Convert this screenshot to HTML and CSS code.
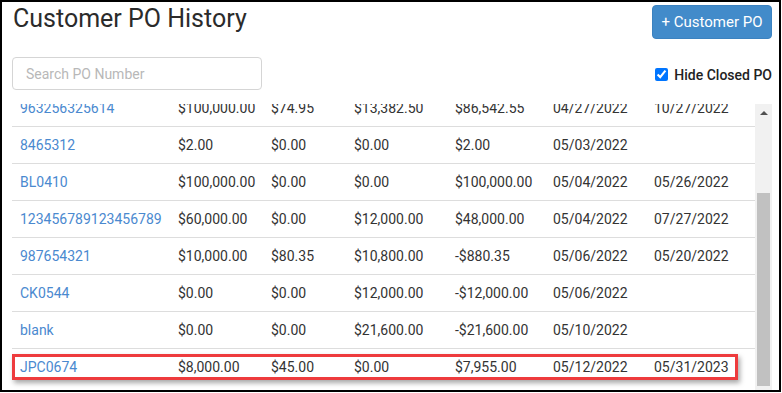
FILE: index.html
```html
<!DOCTYPE html>
<html lang="en">
<head>
    <meta charset="UTF-8">
    <meta name="viewport" content="width=device-width, initial-scale=1.0">
    <title>Customer PO History</title>
    <link rel="stylesheet" href="styles.css">
</head>
<body>
<div class="frame">
    <div class="page">
        <div class="page-head">
            <h1>Customer PO History</h1>
            <button type="button" class="btn-add">+ Customer PO</button>
        </div>

        <div class="filters">
            <input type="text" class="search" placeholder="Search PO Number" />
            <label class="hide-closed">
                <input type="checkbox" checked />
                Hide Closed PO
            </label>
        </div>

        <div class="po-list">
            <div class="po-viewport">
                <table class="po-table">
                    <colgroup>
                        <col class="c-po"><col class="c-amt"><col class="c-fee"><col class="c-used">
                        <col class="c-bal"><col class="c-date"><col class="c-close">
                    </colgroup>
                    <tbody>
                    <tr><td><a href="#">963256325614</a></td><td>$100,000.00</td><td>$74.95</td><td>$13,382.50</td><td>$86,542.55</td><td>04/27/2022</td><td>10/27/2022</td></tr>
                    <tr><td><a href="#">8465312</a></td><td>$2.00</td><td>$0.00</td><td>$0.00</td><td>$2.00</td><td>05/03/2022</td><td></td></tr>
                    <tr><td><a href="#">BL0410</a></td><td>$100,000.00</td><td>$0.00</td><td>$0.00</td><td>$100,000.00</td><td>05/04/2022</td><td>05/26/2022</td></tr>
                    <tr><td><a href="#">123456789123456789</a></td><td>$60,000.00</td><td>$0.00</td><td>$12,000.00</td><td>$48,000.00</td><td>05/04/2022</td><td>07/27/2022</td></tr>
                    <tr><td><a href="#">987654321</a></td><td>$10,000.00</td><td>$80.35</td><td>$10,800.00</td><td>-$880.35</td><td>05/06/2022</td><td>05/20/2022</td></tr>
                    <tr><td><a href="#">CK0544</a></td><td>$0.00</td><td>$0.00</td><td>$12,000.00</td><td>-$12,000.00</td><td>05/06/2022</td><td></td></tr>
                    <tr><td><a href="#">blank</a></td><td>$0.00</td><td>$0.00</td><td>$21,600.00</td><td>-$21,600.00</td><td>05/10/2022</td><td></td></tr>
                    <tr><td><a href="#">JPC0674</a></td><td>$8,000.00</td><td>$45.00</td><td>$0.00</td><td>$7,955.00</td><td>05/12/2022</td><td>05/31/2023</td></tr>
                    </tbody>
                </table>
            </div>
            <div class="scrollbar">
                <span class="scroll-arrow"></span>
                <span class="scroll-thumb"></span>
            </div>
        </div>
    </div>

    <div class="callout"></div>
</div>
</body>
</html>
```

FILE: styles.css
```css
* {
    margin: 0;
    padding: 0;
    box-sizing: border-box;
}

body {
    background: #fff;
    font-family: Roboto, "Liberation Sans", sans-serif;
    font-size: 14px;
    color: #333;
}

.frame {
    position: relative;
    width: 781px;
    height: 392px;
    border: 2px solid #000;
    overflow: hidden;
}

.page {
    padding: 2px 7px 0 10px;
}

.page-head {
    display: flex;
    justify-content: space-between;
    align-items: flex-start;
}

.page-head h1 {
    font-size: 25px;
    font-weight: 400;
    line-height: 30px;
    color: #2b2b2b;
    padding-left: 1px;
}

.btn-add {
    margin-top: 1px;
    width: 120px;
    height: 34px;
    background: #428bca;
    color: #fff;
    border: 1px solid #3b82c0;
    border-radius: 4px;
    font-family: Roboto, "Liberation Sans", sans-serif;
    font-size: 15px;
}

.filters {
    display: flex;
    justify-content: space-between;
    align-items: center;
    margin-top: 18px;
}

.search {
    width: 250px;
    height: 33px;
    padding: 0 13px;
    border: 1px solid #d5d5d5;
    border-radius: 4px;
    font-family: Roboto, "Liberation Sans", sans-serif;
    font-size: 14px;
    color: #333;
}

.search::placeholder {
    color: #b8b8b8;
}

.hide-closed {
    display: flex;
    align-items: center;
    gap: 6px;
    font-weight: 500;
    color: #222;
    padding-top: 2px;
}

.hide-closed input {
    width: 13px;
    height: 13px;
    margin: 0;
}

.po-list {
    display: flex;
    margin-top: 14px;
    height: 286px;
}

.po-viewport {
    width: 744px;
    overflow: hidden;
}

.po-table {
    width: 744px;
    margin-top: -15px;
    table-layout: fixed;
    border-collapse: collapse;
}

.c-po { width: 158px; }
.c-amt { width: 93px; }
.c-fee { width: 83px; }
.c-used { width: 101px; }
.c-bal { width: 98px; }
.c-date { width: 101px; }
.c-close { width: 110px; }

.po-table td {
    padding: 8px;
    line-height: 20px;
    border-top: 1px solid #ddd;
    white-space: nowrap;
    color: #333;
}

.po-table a {
    color: #4a89cf;
    text-decoration: none;
}

.scrollbar {
    display: flex;
    flex-direction: column;
    align-items: center;
    width: 17px;
    background: #f1f1f1;
}

.scroll-arrow {
    margin-top: 7px;
    width: 0;
    height: 0;
    border-left: 4px solid transparent;
    border-right: 4px solid transparent;
    border-bottom: 4px solid #505050;
}

.scroll-thumb {
    margin-top: 78px;
    width: 13px;
    height: 193px;
    background: #c1c1c1;
}

.callout {
    position: absolute;
    left: 10px;
    top: 352px;
    width: 726px;
    height: 26px;
    border: 3px solid #ee3b3d;
    box-shadow: 2px 3px 5px rgba(0, 0, 0, 0.35);
}
```
